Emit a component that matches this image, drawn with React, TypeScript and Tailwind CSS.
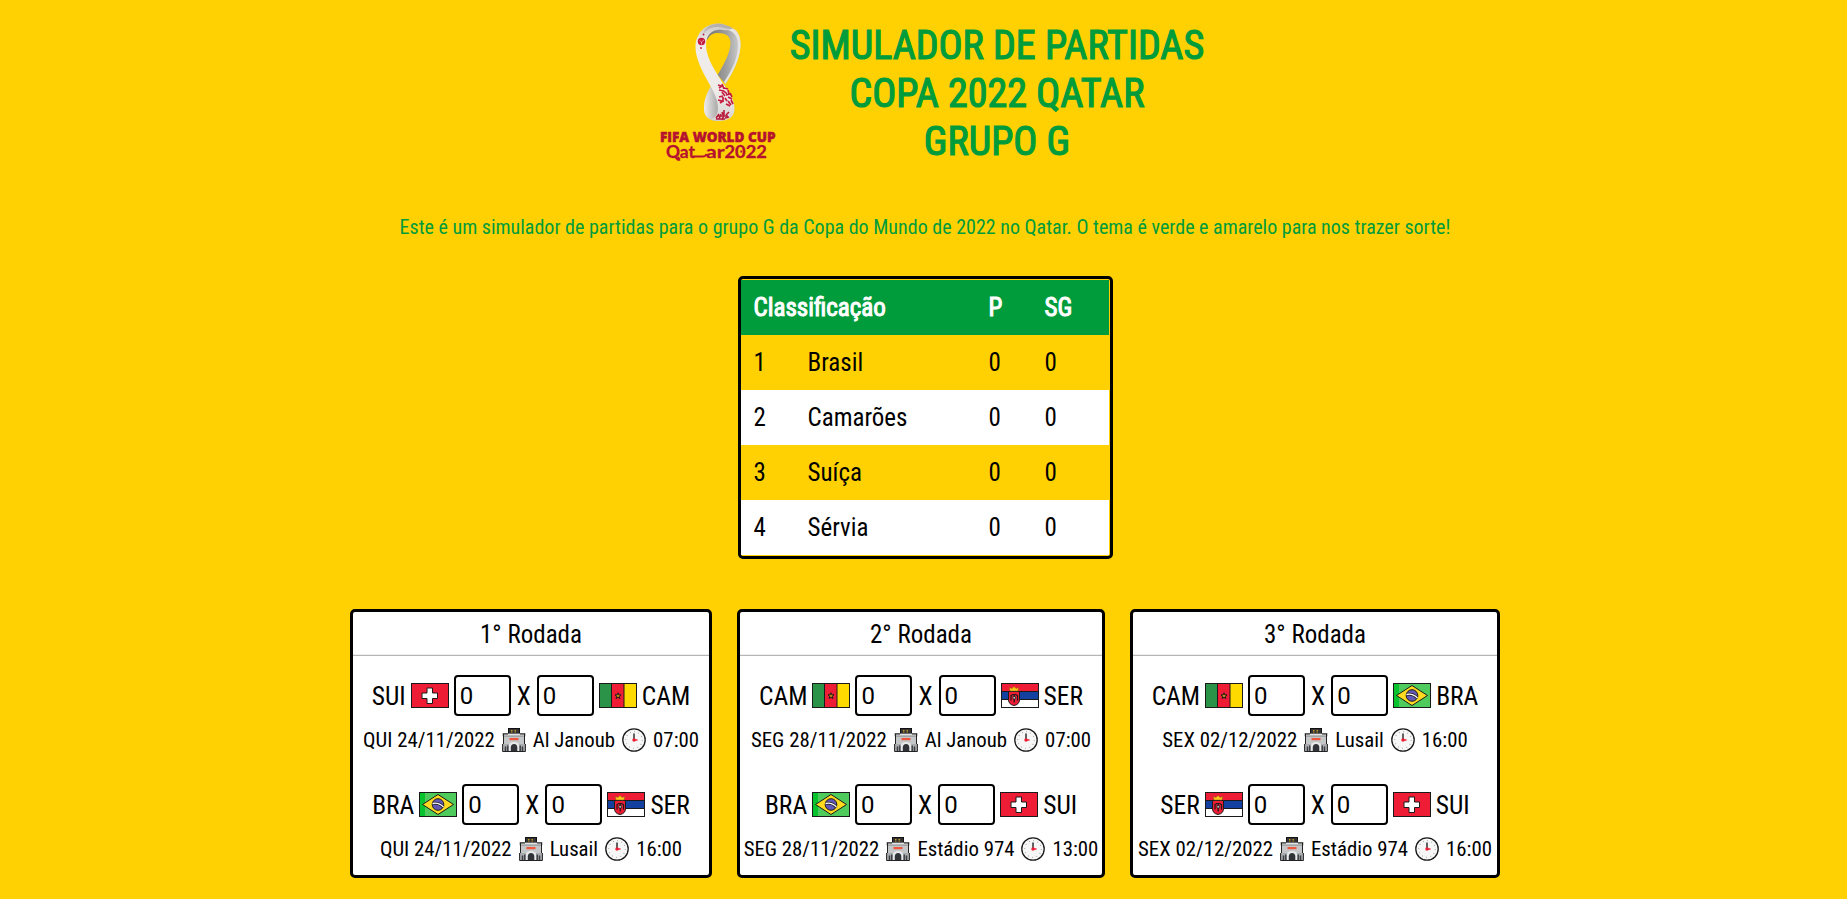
type Team = "SUI" | "CAM" | "BRA" | "SER";
type Match = { home: Team; away: Team; date: string; stadium: string; time: string };

const standings = ["Brasil", "Camarões", "Suíça", "Sérvia"];

const rounds: { title: string; width: string; matches: Match[] }[] = [
  {
    title: "1° Rodada",
    width: "w-[362px]",
    matches: [
      { home: "SUI", away: "CAM", date: "QUI 24/11/2022", stadium: "Al Janoub", time: "07:00" },
      { home: "BRA", away: "SER", date: "QUI 24/11/2022", stadium: "Lusail", time: "16:00" },
    ],
  },
  {
    title: "2° Rodada",
    width: "w-[368px]",
    matches: [
      { home: "CAM", away: "SER", date: "SEG 28/11/2022", stadium: "Al Janoub", time: "07:00" },
      { home: "BRA", away: "SUI", date: "SEG 28/11/2022", stadium: "Estádio 974", time: "13:00" },
    ],
  },
  {
    title: "3° Rodada",
    width: "w-[370px]",
    matches: [
      { home: "CAM", away: "BRA", date: "SEX 02/12/2022", stadium: "Lusail", time: "16:00" },
      { home: "SER", away: "SUI", date: "SEX 02/12/2022", stadium: "Estádio 974", time: "16:00" },
    ],
  },
];

function Flag({ team }: { team: Team }) {
  return (
    <svg viewBox="0 0 38 25" className="h-[25px] w-[38px] shrink-0">
      {team === "SUI" && (
        <>
          <rect width="38" height="25" fill="#ee1c35" />
          <path d="M16 5h5.500v5h5v5.500h-5v5h-5.500v-5h-5v-5.500h5z" fill="#fff" stroke="#1a1a1a" strokeWidth="1" />
        </>
      )}
      {team === "CAM" && (
        <>
          <rect width="38" height="25" fill="#ee1c35" />
          <rect width="12.5" height="25" fill="#2b9348" />
          <rect x="25" width="13" height="25" fill="#ffda00" />
          <path d="M12.5 0v25M25 0v25" stroke="#1a1a1a" />
          <path d="M19 9.800l.8 2 2.200.1-1.700 1.400.6 2.200-1.900-1.200-1.900 1.200.6-2.200-1.700-1.400 2.200-.1z" fill="#c98a10" stroke="#1a1a1a" strokeWidth="1" />
        </>
      )}
      {team === "BRA" && (
        <>
          <rect width="38" height="25" fill="#4fcb5d" />
          <rect width="6" height="25" fill="#06c32e" />
          <path d="M3.5 12.5L19 2.500L34.500 12.500L19 22.500z" fill="#ffda1f" stroke="#1a1a1a" strokeWidth="1" />
          <circle cx="19" cy="12.500" r="5.800" fill="#6159b5" stroke="#1a1a1a" strokeWidth="1" />
          <path d="M13.500 11.500q6-1.500 11 3.500" fill="none" stroke="#1a1a1a" strokeWidth="2.800" />
          <path d="M13.500 11.500q6-1.500 11 3.500" fill="none" stroke="#fff" strokeWidth="1.300" />
        </>
      )}
      {team === "SER" && (
        <>
          <rect width="38" height="25" fill="#fff" />
          <rect width="38" height="8.500" fill="#ee1c35" />
          <rect y="8.500" width="38" height="8" fill="#1440a0" />
          <path d="M0 8.500h38M0 16.500h38" stroke="#1a1a1a" strokeWidth="1" />
          <path d="M7.500 8.500h11v8q0 5-5.500 6q-5.500-1-5.500-6z" fill="#ee1c35" stroke="#1a1a1a" strokeWidth="1" />
          <path d="M10 17.500v-5l2-1h2.500l2 1v5M13.200 11.500v8" fill="none" stroke="#1a1a1a" strokeWidth="1.200" />
          <path d="M12 13.500h2.400v2.500h-2.400z" fill="#c9c9c9" stroke="#1a1a1a" strokeWidth=".7" />
          <path d="M9 8l-.7-3.500 2.600 1L13 3.500l2.200 2 2.500-1L17 8z" fill="#ffc61a" stroke="#8a5a10" strokeWidth=".5" />
        </>
      )}
      <rect x=".5" y=".5" width="37" height="24" fill="none" stroke="#1a1a1a" />
    </svg>
  );
}

function StadiumIcon() {
  return (
    <svg viewBox="0 0 24 24" className="size-6 shrink-0">
      <rect x="6.500" y=".5" width="11" height="6" fill="#333" stroke="#111" />
      <path d="M9 2.500h1.500M12.500 2.500h1.500M9 4h1.500M12.500 4h1.500" stroke="#d9a520" strokeWidth=".9" />
      <rect x="1.500" y="6" width="21" height="17" fill="#c4c6c8" />
      <rect x="1" y="5.500" width="22" height="2.500" fill="#e2e3e4" stroke="#555" strokeWidth=".6" />
      <rect x=".5" y="16" width="23" height="7.500" fill="#a9abae" />
      <rect x="7.500" y="10" width="9" height="2.200" fill="#f0563c" />
      <path d="M6.500 23.500v-5a5.500 4.500 0 0 1 11 0v5z" fill="#e8e9ea" />
      <path d="M8.800 23.500v-4.500a3.300 3.500 0 0 1 6.500 0v4.500z" fill="#2f3236" />
      <path d="M3.500 23v-4.500M5.800 23v-5.500M18.200 23v-5.500M20.500 23v-4.500" stroke="#3b3e42" strokeWidth="1.500" />
      <path d="M1.500 6v10M22.500 6v10M.6 16v7.500h22.800v-7.500M1 6h5M18 6h5" fill="none" stroke="#222" strokeWidth="1" />
    </svg>
  );
}

function ClockIcon() {
  return (
    <svg viewBox="0 0 24 24" className="size-6 shrink-0">
      <circle cx="12" cy="12" r="11.200" fill="#f6f6f6" stroke="#1a1a1a" strokeWidth="1.300" />
      <circle cx="12" cy="12" r="8.300" fill="none" stroke="#999" strokeWidth="1.200" strokeDasharray=".7 3.646" />
      <path d="M12 5.500v6" stroke="#111" strokeWidth="1.300" />
      <path d="M11 12h4.500" stroke="#ee1c35" strokeWidth="1.500" />
      <circle cx="12" cy="12" r="1.700" fill="#ee1c35" />
    </svg>
  );
}

function Logo() {
  return (
    <svg viewBox="646 14 144 156" className="h-[156px] w-[144px] shrink-0">
      <defs>
        <linearGradient id="front" x1="0" y1="0" x2="0" y2="1">
          <stop offset="0" stopColor="#c9c6c4" />
          <stop offset=".2" stopColor="#efecea" />
          <stop offset=".7" stopColor="#eeebe9" />
          <stop offset="1" stopColor="#d8d4d2" />
        </linearGradient>
        <linearGradient id="back" x1="0" y1="0" x2="1" y2="0">
          <stop offset="0" stopColor="#6f6f6f" />
          <stop offset=".6" stopColor="#a0a0a0" />
          <stop offset="1" stopColor="#d0d0d0" />
        </linearGradient>
        <linearGradient id="inner" x1="0" y1="0" x2="1" y2="0">
          <stop offset="0" stopColor="#f0eeec" />
          <stop offset="1" stopColor="#8a8a8a" />
        </linearGradient>
      </defs>
      <path d="M706 34C711 27 722 25 731 28C737 29 741 36 740.500 46C739.500 60 733 72 725.500 84L717.500 75C723 66 731 52 730.500 42C730 35 724 32.500 716 33Q710 33.500 707 40Z" fill="url(#back)" />
      <path d="M731 28C737 29 741 36 740.500 46C739.500 60 733 72 725.500 84L724 82C732 70 738 58 738 45C738 36 734 32 728 30Z" fill="#e6e4e2" />
      <path d="M711 86C706 94 703.500 102 704 110C704.500 117 710 121 717 121L724 118L718 92Z" fill="url(#inner)" />
      <path d="M695.500 46C696 33 706 23 719 23.500C726 23.500 729 28 733 28.500C729 31 724 30 720 29.500C711 30 706 36 706 45C706 58 716 72 722 82C729 91 734.500 100 734.500 109C734.500 117 728 121 719 121C715 121 712 120 711 119C718 117 719 110 717 101C714 87 695 66 695.500 46Z" fill="url(#front)" />
      <path d="M703 35C706 28 713 26.500 719 27C724 27.500 728 30 733 28.500C729 25 726 26 722 24C714 22.500 705 26 703 35Z" fill="#b5b1ae" />
      <circle cx="701.500" cy="41.500" r="3.700" fill="#c41b3f" />
      <path d="M699.500 40.500l2 1.500 2.500-2M701.500 42v2.500" stroke="#efb9c2" strokeWidth=".7" fill="none" />
      <circle cx="703.500" cy="34.500" r=".9" fill="#c41b3f" />
      <circle cx="701" cy="48" r=".9" fill="#c41b3f" />
      <path
        d="M718 85l3 1M719 88l4-3M722 84l2 5M719 90l5 1M724 88l4 1M724 91l3 3M728 90l1 4M726 95l5-1M728 97l4 2M730 93l2 4M731 100l2 4M728 101l3 4M725 98l2 3M719 97l4-1M718 100l4 1M723 97v5M720 103l3-2M726 104l4 2M722 92l3 4"
        stroke="#c41b3f"
        strokeWidth="1.700"
        fill="none"
      />
      <path d="M716 118l3-4M719 119l2-5M722 120l2-5M722 112l1 3M724 110v5M725 118l4-1M726 115l3-3M718 116h10M716 119h9" stroke="#b81c3c" strokeWidth="1.600" fill="none" />
      <text x="660" y="142" textLength="115.500" lengthAdjust="spacingAndGlyphs" fill="#b5122f" stroke="#b5122f" strokeWidth=".5" className="font-['Open_Sans'] text-[13.400px] font-extrabold">
        FIFA WORLD CUP
      </text>
      <g fill="#b5122f" stroke="#b5122f" strokeWidth=".3" className="font-['Lato'] text-[16.500px] font-bold">
        <text x="666" y="157.500" textLength="29" lengthAdjust="spacingAndGlyphs">Qat</text>
        <text x="706" y="157.500" textLength="18.500" lengthAdjust="spacingAndGlyphs">ar</text>
        <text x="724.500" y="157.500" textLength="42.500" lengthAdjust="spacingAndGlyphs">2022</text>
      </g>
      <path d="M693 156.500H703Q705.500 156.500 706.500 154" stroke="#b5122f" strokeWidth="2" fill="none" />
      <path d="M678 157l2 2.500M741.200 150.500v2M741.200 145v1" stroke="#b5122f" strokeWidth="1.800" />
    </svg>
  );
}

function ScoreInput() {
  return (
    <input
      defaultValue="0"
      className="h-[41px] w-[57px] shrink-0 rounded border-2 border-black bg-white px-1 pt-px pb-0 font-[Roboto] text-[24px] text-black outline-none"
    />
  );
}

function MatchRow({ match }: { match: Match }) {
  return (
    <div className="flex flex-col items-center">
      <div className="flex h-[41px] items-center gap-[5px] text-[25.500px] leading-[30px]">
        <span>{match.home}</span>
        <Flag team={match.home} />
        <ScoreInput />
        <span className="px-px">X</span>
        <ScoreInput />
        <Flag team={match.away} />
        <span>{match.away}</span>
      </div>
      <div className="mt-3 flex h-6 items-center gap-[7px] text-[20.800px] leading-6 whitespace-nowrap">
        <span>{match.date}</span>
        <StadiumIcon />
        <span>{match.stadium}</span>
        <ClockIcon />
        <span>{match.time}</span>
      </div>
    </div>
  );
}

export default function App() {
  return (
    <div className="flex min-h-[899px] flex-col items-center bg-[#ffd103] pl-[3px] font-['Roboto_Condensed',Roboto,sans-serif] text-black">
      <header className="flex pt-3.5 text-[#009c3b]">
        <Logo />
        <h1 className="mt-2 text-center text-[40px] leading-[48px] font-normal [-webkit-text-stroke:1.200px_#009c3b]">
          SIMULADOR DE PARTIDAS
          <br />
          COPA 2022 QATAR
          <br />
          GRUPO G
        </h1>
      </header>
      <p className="mt-[45px] text-[20px] leading-6 text-[#009c3b]">
        Este é um simulador de partidas para o grupo G da Copa do Mundo de 2022 no Qatar. O tema é verde e amarelo para nos trazer sorte!
      </p>
      <div className="mt-[37px] h-[283px] w-[375px] rounded-[5px] border-3 border-black pt-px pr-px pb-px">
        <table className="w-full table-fixed border-collapse text-left text-[25px] leading-[30px]">
          <colgroup>
            <col className="w-[54px]" />
            <col className="w-[181px]" />
            <col className="w-[56px]" />
            <col />
          </colgroup>
          <thead>
            <tr className="h-[55px] bg-[#009c3b] text-white [-webkit-text-stroke:1px_white]">
              <th colSpan={2} className="p-0 pl-[13px] font-normal">Classificação</th>
              <th className="p-0 pl-[13px] font-normal">P</th>
              <th className="p-0 pl-[13px] font-normal">SG</th>
            </tr>
          </thead>
          <tbody>
            {standings.map((team, i) => (
              <tr key={team} className="h-[55px] even:bg-white">
                <td className="p-0 pt-px pl-[13px]">{i + 1}</td>
                <td className="p-0 pt-px pl-[13px]">{team}</td>
                <td className="p-0 pt-px pl-[13px]">0</td>
                <td className="p-0 pt-px pl-[13px]">0</td>
              </tr>
            ))}
          </tbody>
        </table>
      </div>
      <main className="mt-[50px] flex gap-[25px]">
        {rounds.map((round) => (
          <section key={round.title} className={`${round.width} h-[269px] rounded-[5px] border-3 border-black bg-white`}>
            <h2 className="h-[42px] pt-2 text-center text-[25px] leading-[30px]">{round.title}</h2>
            <hr className="h-0.5 border-t border-b border-t-[#eeeeee] border-b-[#b5b5b5]" />
            <div className="flex flex-col gap-8 pt-[19px]">
              {round.matches.map((match) => (
                <MatchRow key={match.home} match={match} />
              ))}
            </div>
          </section>
        ))}
      </main>
    </div>
  );
}
